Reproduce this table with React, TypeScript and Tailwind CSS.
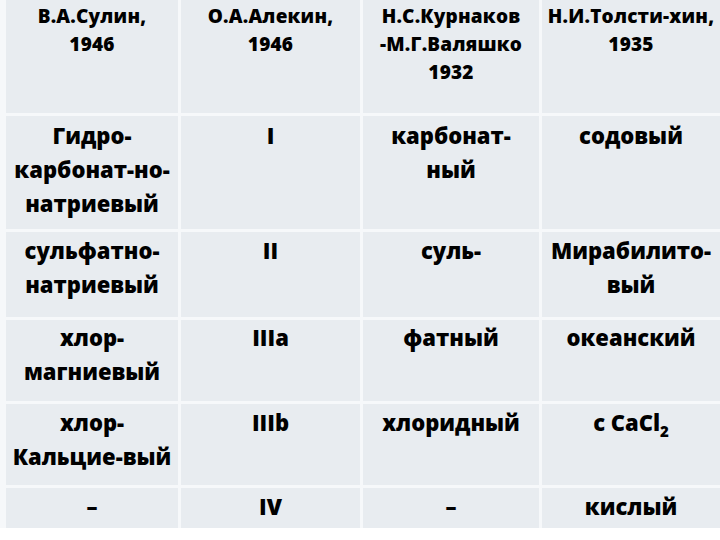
import React from "react";

type Cell = React.ReactNode;

const header: string[][] = [
  ["В.А.Сулин,", "1946"],
  ["О.А.Алекин,", "1946"],
  ["Н.С.Курнаков", "-М.Г.Валяшко", "1932"],
  ["Н.И.Толсти-хин,", "1935"],
];

const rows: { h: string; cells: Cell[][] }[] = [
  {
    h: "pt-[2px]",
    cells: [["Гидро-", "карбонат-но-", "натриевый"], ["I"], ["карбонат-", "ный"], ["содовый"]],
  },
  {
    h: "pt-[1px]",
    cells: [["сульфатно-", "натриевый"], ["II"], ["суль-"], ["Мирабилито-", "вый"]],
  },
  {
    h: "pt-0",
    cells: [["хлор-", "магниевый"], ["IIIa"], ["фатный"], ["океанский"]],
  },
  {
    h: "pt-[1px]",
    cells: [
      ["хлор-", "Кальцие-вый"],
      ["IIIb"],
      ["хлоридный"],
      [
        <span key="c">
          с CaCl<sub className="text-[15px] relative top-[6px] align-baseline">2</sub>
        </span>,
      ],
    ],
  },
  {
    h: "pt-[1px]",
    cells: [["–"], ["IV"], ["–"], ["кислый"]],
  },
];

export default function App() {
  return (
    <div
      className="w-[720px] h-[540px] bg-white overflow-hidden text-black"
      style={{ fontFamily: '"Open Sans", "Noto Sans", sans-serif' }}
    >
      <div className="grid grid-cols-[172px_179px_176px_178px] grid-rows-[113px_113px_85px_81px_81px_40px] gap-[3px] pl-[6px] bg-[#f6f8fa] h-[528px]">
        {header.map((lines, i) => (
          <div
            key={"h" + i}
            className="bg-[#e8ecf0] text-center font-extrabold text-[19px] leading-[28px] tracking-[0.2px] pt-[2px]"
          >
            {lines.map((l, j) => (
              <div key={j}>{l}</div>
            ))}
          </div>
        ))}
        {rows.map((r, ri) =>
          r.cells.map((lines, ci) => (
            <div
              key={"r" + ri + "c" + ci}
              className={
                "bg-[#e8ecf0] text-center font-extrabold text-[22px] leading-[34px] " + r.h
              }
            >
              {lines.map((l, j) => (
                <div key={j}>{l}</div>
              ))}
            </div>
          ))
        )}
      </div>
    </div>
  );
}
